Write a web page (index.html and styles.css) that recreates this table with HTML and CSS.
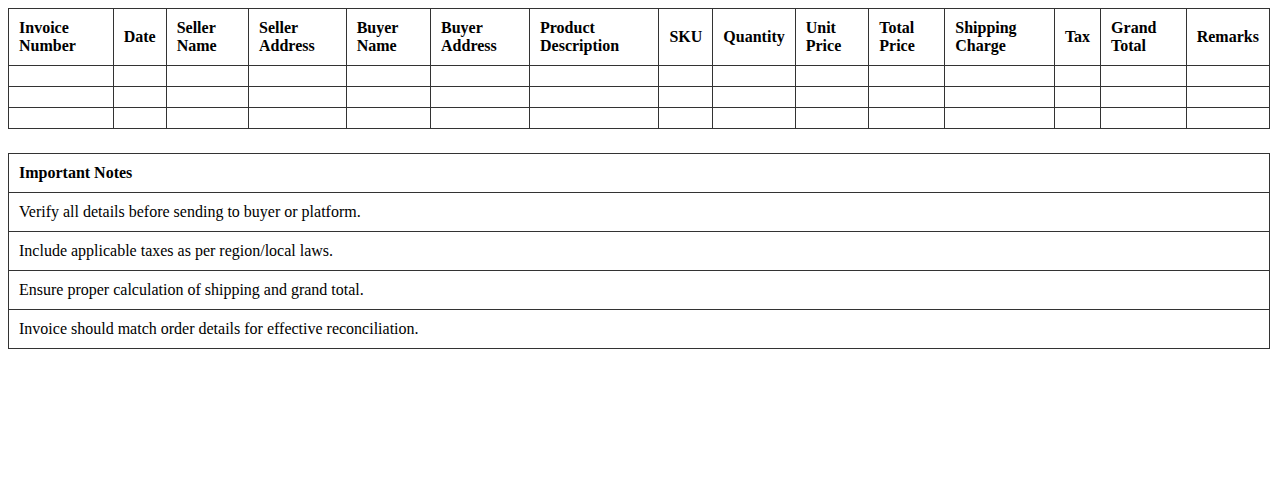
FILE: index.html
```html
<!DOCTYPE html>
<html>
<head>
<meta charset="utf-8">
<link rel="stylesheet" href="styles.css">
</head>
<body>
<table class="grid invoice">
  <thead>
    <tr>
      <th>Invoice Number</th>
      <th>Date</th>
      <th>Seller Name</th>
      <th>Seller Address</th>
      <th>Buyer Name</th>
      <th>Buyer Address</th>
      <th>Product Description</th>
      <th>SKU</th>
      <th>Quantity</th>
      <th>Unit Price</th>
      <th>Total Price</th>
      <th>Shipping Charge</th>
      <th>Tax</th>
      <th>Grand Total</th>
      <th>Remarks</th>
    </tr>
  </thead>
  <tbody>
    <tr><td></td><td></td><td></td><td></td><td></td><td></td><td></td><td></td><td></td><td></td><td></td><td></td><td></td><td></td><td></td></tr>
    <tr><td></td><td></td><td></td><td></td><td></td><td></td><td></td><td></td><td></td><td></td><td></td><td></td><td></td><td></td><td></td></tr>
    <tr><td></td><td></td><td></td><td></td><td></td><td></td><td></td><td></td><td></td><td></td><td></td><td></td><td></td><td></td><td></td></tr>
  </tbody>
</table>
<table class="grid notes">
  <thead>
    <tr><th>Important Notes</th></tr>
  </thead>
  <tbody>
    <tr><td>Verify all details before sending to buyer or platform.</td></tr>
    <tr><td>Include applicable taxes as per region/local laws.</td></tr>
    <tr><td>Ensure proper calculation of shipping and grand total.</td></tr>
    <tr><td>Invoice should match order details for effective reconciliation.</td></tr>
  </tbody>
</table>
</body>
</html>
```
FILE: styles.css
```css
body {
  margin: 8px;
  font-family: "Liberation Serif", "Times New Roman", serif;
  font-size: 16px;
  color: #000;
  background: #fff;
}
.grid {
  width: 100%;
  border-collapse: collapse;
}
.grid th,
.grid td {
  border: 1px solid #333;
  padding: 10px;
  text-align: left;
  vertical-align: middle;
}
.grid th {
  font-weight: bold;
}
.invoice {
  margin-bottom: 24px;
}
```
